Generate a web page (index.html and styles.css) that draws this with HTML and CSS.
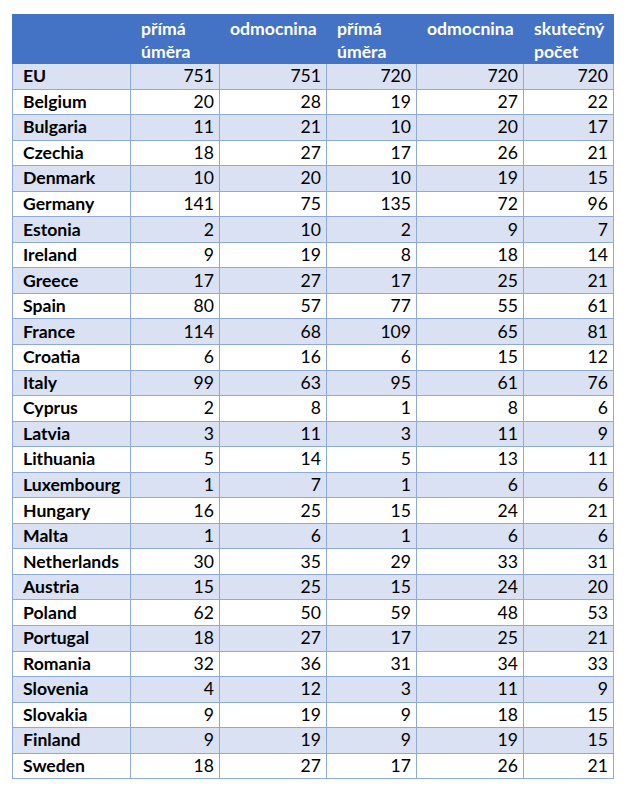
FILE: index.html
```html
<!DOCTYPE html>
<html lang="cs">
<head>
<meta charset="utf-8">
<title>Tabulka</title>
<link rel="stylesheet" href="styles.css">
</head>
<body>
<table class="data">
  <colgroup>
    <col class="c-name"><col class="c-a"><col class="c-b"><col class="c-a2"><col class="c-b2"><col class="c-c">
  </colgroup>
  <thead>
    <tr class="head">
      <th></th><th>přímá<br>úměra</th><th>odmocnina</th><th>přímá<br>úměra</th><th>odmocnina</th><th>skutečný<br>počet</th>
    </tr>
  </thead>
  <tbody>
    <tr class="band"><th>EU</th><td>751</td><td>751</td><td>720</td><td>720</td><td>720</td></tr>
    <tr><th>Belgium</th><td>20</td><td>28</td><td>19</td><td>27</td><td>22</td></tr>
    <tr class="band"><th>Bulgaria</th><td>11</td><td>21</td><td>10</td><td>20</td><td>17</td></tr>
    <tr><th>Czechia</th><td>18</td><td>27</td><td>17</td><td>26</td><td>21</td></tr>
    <tr class="band"><th>Denmark</th><td>10</td><td>20</td><td>10</td><td>19</td><td>15</td></tr>
    <tr><th>Germany</th><td>141</td><td>75</td><td>135</td><td>72</td><td>96</td></tr>
    <tr class="band"><th>Estonia</th><td>2</td><td>10</td><td>2</td><td>9</td><td>7</td></tr>
    <tr><th>Ireland</th><td>9</td><td>19</td><td>8</td><td>18</td><td>14</td></tr>
    <tr class="band"><th>Greece</th><td>17</td><td>27</td><td>17</td><td>25</td><td>21</td></tr>
    <tr><th>Spain</th><td>80</td><td>57</td><td>77</td><td>55</td><td>61</td></tr>
    <tr class="band"><th>France</th><td>114</td><td>68</td><td>109</td><td>65</td><td>81</td></tr>
    <tr><th>Croatia</th><td>6</td><td>16</td><td>6</td><td>15</td><td>12</td></tr>
    <tr class="band"><th>Italy</th><td>99</td><td>63</td><td>95</td><td>61</td><td>76</td></tr>
    <tr><th>Cyprus</th><td>2</td><td>8</td><td>1</td><td>8</td><td>6</td></tr>
    <tr class="band"><th>Latvia</th><td>3</td><td>11</td><td>3</td><td>11</td><td>9</td></tr>
    <tr><th>Lithuania</th><td>5</td><td>14</td><td>5</td><td>13</td><td>11</td></tr>
    <tr class="band"><th>Luxembourg</th><td>1</td><td>7</td><td>1</td><td>6</td><td>6</td></tr>
    <tr><th>Hungary</th><td>16</td><td>25</td><td>15</td><td>24</td><td>21</td></tr>
    <tr class="band"><th>Malta</th><td>1</td><td>6</td><td>1</td><td>6</td><td>6</td></tr>
    <tr><th>Netherlands</th><td>30</td><td>35</td><td>29</td><td>33</td><td>31</td></tr>
    <tr class="band"><th>Austria</th><td>15</td><td>25</td><td>15</td><td>24</td><td>20</td></tr>
    <tr><th>Poland</th><td>62</td><td>50</td><td>59</td><td>48</td><td>53</td></tr>
    <tr class="band"><th>Portugal</th><td>18</td><td>27</td><td>17</td><td>25</td><td>21</td></tr>
    <tr><th>Romania</th><td>32</td><td>36</td><td>31</td><td>34</td><td>33</td></tr>
    <tr class="band"><th>Slovenia</th><td>4</td><td>12</td><td>3</td><td>11</td><td>9</td></tr>
    <tr><th>Slovakia</th><td>9</td><td>19</td><td>9</td><td>18</td><td>15</td></tr>
    <tr class="band"><th>Finland</th><td>9</td><td>19</td><td>9</td><td>19</td><td>15</td></tr>
    <tr><th>Sweden</th><td>18</td><td>27</td><td>17</td><td>26</td><td>21</td></tr>
  </tbody>
</table>
</body>
</html>
```
FILE: styles.css
```css
html, body {
  margin: 0;
  padding: 0;
  background: #ffffff;
}
body {
  padding: 14px 0 0 12px;
  font-family: Lato, "Open Sans", "Liberation Sans", sans-serif;
  font-size: 17.6px;
  color: #000000;
}
.data {
  border-collapse: collapse;
  table-layout: fixed;
  width: 601px;
}
.c-name { width: 118px; }
.c-a { width: 89px; }
.c-b { width: 107px; }
.c-a2 { width: 90px; }
.c-b2 { width: 107px; }
.c-c { width: 90px; }

.head th {
  background: #4472c4;
  color: #ffffff;
  font-weight: 700;
  text-align: left;
  vertical-align: top;
  height: 46px;
  padding: 2px 2px 0 10px;
  line-height: 23px;
  border: 1px solid #4472c4;
  box-sizing: border-box;
}
tbody th, tbody td {
  height: 25.55px;
  box-sizing: border-box;
  border: 1px solid #8eaadb;
  padding: 0 5px 0 10px;
  line-height: 20px;
  vertical-align: middle;
  white-space: nowrap;
}
tbody th {
  text-align: left;
  font-weight: 700;
}
tbody td {
  text-align: right;
  font-weight: 400;
}
tbody tr.band th, tbody tr.band td {
  background: #d9e1f2;
}
```
